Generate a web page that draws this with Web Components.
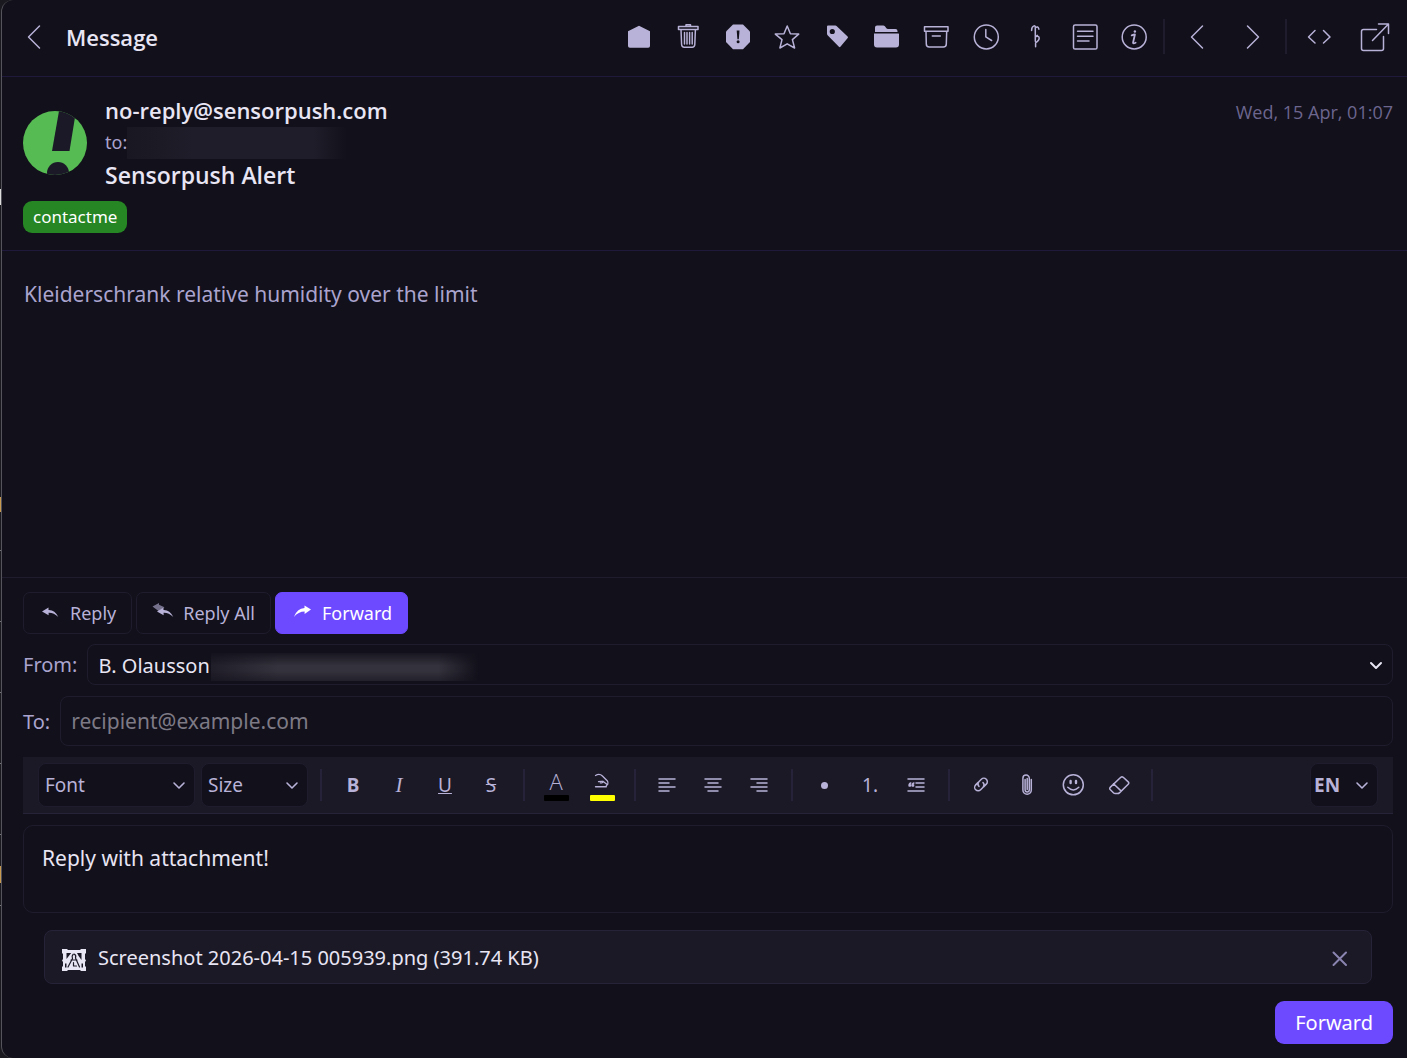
<!DOCTYPE html>
<html lang="en">
<head>
<meta charset="utf-8">
<title>Message</title>
<style>
  html {
    --bg: #12101a;
    --surface: #1b1926;
    --line: #1f1c2e;
    --line-accent: #1f1a3c;
    --text: #e8e5f4;
    --soft: #b8b2d8;
    --muted: #aaa4ce;
    --faint: #6c668f;
    --primary: #6d4aff;
    --heading-font: "Open Sans", "Noto Sans", sans-serif;
    background: #1a191f;
  }
  body {
    margin: 0;
    font-family: "Noto Sans", "Open Sans", sans-serif;
    font-size: 21px;
    color: var(--text);
  }
</style>
</head>
<body>
<mail-window>
  <message-header slot="header">Message</message-header>
  <message-meta slot="meta">
    <span slot="from">no-reply@sensorpush.com</span>
    <span slot="subject">Sensorpush Alert</span>
    <span slot="label">contactme</span>
    <time slot="date">Wed, 15 Apr, 01:07</time>
  </message-meta>
  <message-body slot="body">Kleiderschrank relative humidity over the limit</message-body>
  <reply-composer slot="composer">
    <attachment-item>Screenshot 2026-04-15 005939.png (391.74 KB)</attachment-item>
  </reply-composer>
</mail-window>

<script>
(function() {
  const ICONS = {
    open: '<path fill="currentColor" stroke="none" d="M15 3.8 26 9.2V24q0 1.8-1.8 1.8H5.800Q4 25.800 4 24V9.200Z"/>',
    trash: '<path d="M5.500 4.500h19.500v3h-19.500zM13 4.500v-1.700h4.500v1.700M8 7.500l.6 15q.2 2.800 2.600 2.800h8q2.400 0 2.600-2.800l.6-15M11.500 10.500v11.500M14 10.500v11.500M16.600 10.500v11.500M19.200 10.500v11.500"/>',
    spam: '<path fill="currentColor" stroke="none" d="M10 2.500h10l7 7v10.500l-7 7.200h-10l-7-7.200v-10.500z"/><path fill="#12101a" stroke="none" d="M13.700 8.500h2.800l-.7 8.800h-1.400z"/><circle cx="15.100" cy="19.800" r="1.500" fill="#12101a" stroke="none"/>',
    star: '<path d="m15.200 4 3.200 7.800 8.300.3-6.300 5.500 2.200 8.400-7.400-4.200-7.300 4.200 2.100-8.400-6.700-5.500 8.700-.3z"/>',
    tag: '<path fill="currentColor" stroke="none" fill-rule="evenodd" d="M6 3.600h7.300q.9 0 1.500.6l10.800 10.200q.8.800.1 1.600l-7.300 8.800q-.7.700-1.500 0L5.600 13.300q-.6-.6-.6-1.500V4.600q0-1 1-1zM10.300 6.900a2.600 2.600 0 1 0 0 5.200 2.600 2.600 0 0 0 0-5.200z"/>',
    folder: '<path fill="currentColor" stroke="none" d="M4 10V5.500q0-2 2-2h6.200q1 0 1.700.8l1.500 1.900q.6.700 1.600.7h7.500q2 0 2 2V10zM3 11.500h24.500q.5 0 .5.600V22.500q0 3-3 3H6q-3 0-3-3V12.100q0-.6 0-.6z"/>',
    archive: '<path d="M3.500 4.700h23.500v4.600h-23.500zM5 9.300l.3 12.800q0 3 3 3h14q3 0 3-3l.4-12.800M11.300 14h8"/>',
    clock: '<circle cx="15.300" cy="14.900" r="12"/><path d="M14.800 7.600v7.300l5.800 3.600"/>',
    snooze: '<path d="M11.600 8.500q0-3.800 2.400-4.600 1.200-.3 1.300 1.300V15l2-1.600M15.300 5.600q2.800-2 3.600 1.600M15.300 14.700q4-1.200 3.900 1.500-.2 2.500-3.600 4.600V24.700M15.300 13v6.300"/>',
    note: '<rect x="3.500" y="3" width="23.500" height="24" rx="1.600"/><path d="M7.500 9.300h15.500M7.500 14.200h15.500M7.500 19h11.500"/>',
    info: '<circle cx="15.200" cy="14.900" r="12"/><circle cx="15.900" cy="9.500" r="1.200" fill="currentColor" stroke="none"/><path stroke-width="1.800" d="M12.700 13.300q2-.8 3.200-.8l-1.800 8q-.3 1.600 2.500.2"/>',
    prev: '<path d="M20.500 4 9.500 15 20.500 26"/>',
    next: '<path d="M9.500 4l11 11-11 11"/>',
    code: '<path d="M11 8.500 4.500 15l6.500 6M19.500 8.500l6.500 6.500-6.500 6"/>',
    popout: '<path d="M16.500 7.500H3.500q-2 0-2 2v17q0 2 2 2h18q2 0 2-2V14.500M12.500 18.500 28.500 2M18.500 2h10v9.500"/>',
    reply: '<path fill="currentColor" stroke="none" d="M7 13.500 13.500 9.500v2.400q6.300-.3 9.800 7.100-4.500-4.500-9.700-4.300v2.600z"/>',
    replyall: '<path fill="currentColor" stroke="none" opacity=".6" d="M4.500 8.500 11 5v1.700l5.500 2.500-6 3.800z"/><path fill="currentColor" stroke="none" d="M9 13.500 15.500 9.500v2.400q6.300-.3 9.800 7.100-4.500-4.500-9.700-4.300v2.600z"/>',
    forward: '<path fill="currentColor" stroke="none" d="M24 11.500 17.500 7.500v2.400q-7.500.3-10.600 9.100 4.500-5.500 10.700-5.500v2.600z"/>',
    marker: '<path d="M7.500 7.500q4.500-3 8 .5l5.500 5.500q1.500 2.200.7 4l-2 2.300M7.500 20.500h12.500M11 14.500q5-.7 5 .5t-3 1M16 14l5 4"/>',
    left: '<path d="M7 9h16M7 13h10M7 17h16M7 21h10"/>',
    center: '<path d="M7 9h16M10 13h10M7 17h16M10 21h10"/>',
    right: '<path d="M7 9h16M13 13h10M7 17h16M13 21h10"/>',
    quote: '<path d="M7 9h16M15 13h8M15 17h8M7 21h16"/><path d="M9.800 13q-2 .7-1.700 3h1.300v-1.200H8.200M12.900 13q-2 .7-1.700 3h1.300v-1.200h-1.200"/>',
    link: '<g transform="rotate(-45 15 14.500)"><path d="M14.500 11h-3.500a3.500 3.500 0 0 0 0 7h3.500q3.300-.5 3.300-3.500M15.500 18h3.500a3.500 3.500 0 0 0 0-7h-3.500q-3.300.5-3.300 3.500"/></g>',
    clip: '<path d="M19.300 9.500v10.500a4.200 4.200 0 0 1-8.400 0V8.300a3.200 3.200 0 0 1 6.400 0v11.500a2 2 0 0 1-4.200 0V9.500M15.200 8.500v11"/>',
    smile: '<circle cx="15.300" cy="14.800" r="10"/><path d="M9.800 17.300q5.500 5.300 11 0"/><path stroke-width="2.400" d="M12.600 11v2M18 11v2"/>',
    eraser: '<path d="M16.800 7.300q1.200-1 2.400 0l5 4.600q1.200 1.200 0 2.400l-8.500 8.300q-1 1-2.200 1h-2.300q-1 0-1.800-.8l-3-3q-1.400-1.400 0-2.700zM9.500 13.700l7.500 7.200"/>',
    close: '<path d="M8.500 10.500l12.500 12.500M21 10.500l-12.500 12.500"/>',
    down: '<path d="M10 13l5 5 5-5"/>',
    picture: '<path fill="currentColor" stroke="none" fill-rule="evenodd" d="M3 7h5l1 1h12l1-1h5v4l-1 1v5l1 1.500-1 1.500v4l1 1v4h-5l-1-1H9l-1 1H3v-4l1-1v-4l-1-1.500 1-1.500v-5L3 11zM7.500 11v6l2.700-3.500 2-2.500zM22.500 11h-4.500l1.600 3 2.900 4z"/><path stroke="#1b1926" stroke-width="1.200" d="M15 12q2.500 1 1.500 4l4 9M14 12.500q-1.500 1.500-.5 4l-4.500 8.500M12 18h6M14.500 20.500v3.500h3"/><path fill="#1b1926" stroke="none" d="M6 21.500h1.500v4H6zM22.500 21.500H24v4h-1.500z"/>'
  };

  class MailIcon extends HTMLElement {
    connectedCallback() {
      const root = this.attachShadow({mode: 'open'});
      root.innerHTML = `
<style>
  :host { display: block; width: 30px; height: 30px; flex: none; }
  svg {
    display: block;
    width: 100%;
    height: 100%;
    fill: none;
    stroke: currentColor;
    stroke-width: var(--icon-stroke, 1.5);
    stroke-linejoin: round;
    stroke-linecap: round;
  }
</style>
<svg viewBox="0 0 30 30" aria-hidden="true">${ICONS[this.getAttribute('name')]}</svg>`;
    }
  }

  class MailWindow extends HTMLElement {
    constructor() {
      super();
      this.attachShadow({mode: 'open'}).innerHTML = `
<style>
  :host { display: flex; min-height: 100vh; }
  /* sliver of the message list behind the panel */
  .behind {
    flex: none;
    width: 1px;
    background:
      linear-gradient(#ddd, #ddd) 0 189px / 1px 16px no-repeat,
      linear-gradient(#c89a50, #c89a50) 0 497px / 1px 15px no-repeat,
      linear-gradient(#c89a50, #c89a50) 0 866px / 1px 17px no-repeat,
      repeating-linear-gradient(transparent 0 70px, #77757c 70px 71px) 0 480px / 1px 430px no-repeat,
      #1a191f;
  }
  main {
    flex: 1;
    min-width: 0;
    display: flex;
    flex-direction: column;
    box-sizing: border-box;
    border-left: 1px solid #55535b;
    border-radius: 12px 0 0 12px;
    background: var(--bg);
  }
  slot[name="body"] { display: flex; flex: 1; }
</style>
<div class="behind"></div>
<main>
  <slot name="header"></slot>
  <slot name="meta"></slot>
  <slot name="body"></slot>
  <slot name="composer"></slot>
</main>`;
    }
  }

  class MessageHeader extends HTMLElement {
    constructor() {
      super();
      const actions = [
        ['open', 'Mark as unread'], ['trash', 'Delete'], ['spam', 'Report spam'], ['star', 'Star'],
        ['tag', 'Label'], ['folder', 'Move'], ['archive', 'Archive'], ['clock', 'Remind me'],
        ['snooze', 'Snooze'], ['note', 'Notes'], ['info', 'Details']
      ];
      const button = ([icon, label]) =>
        `<button type="button" aria-label="${label}"><mail-icon name="${icon}"></mail-icon></button>`;
      this.attachShadow({mode: 'open'}).innerHTML = `
<style>
  :host {
    display: flex;
    align-items: center;
    box-sizing: border-box;
    height: 77px;
    padding: 0 4px 3px;
    border-bottom: 1px solid var(--line-accent);
  }
  h1 { flex: 1; margin: 0 0 0 4px; font: 600 22px var(--heading-font); }
  button {
    display: flex;
    align-items: center;
    justify-content: center;
    height: 56px;
    padding: 0;
    border: 0;
    background: none;
    color: var(--soft);
  }
  .wide, .pair button { width: 56px; }
  .actions { display: grid; grid-auto-flow: column; grid-auto-columns: 1fr; width: 545px; }
  .pair { display: flex; }
  hr { width: 2px; height: 35px; margin: 0 4px; border: 0; background: var(--line); }
</style>
<button type="button" class="wide" aria-label="Back"><mail-icon name="prev"></mail-icon></button>
<h1><slot></slot></h1>
<div class="actions">${actions.map(button).join('')}</div>
<hr>
<div class="pair">${[['prev', 'Previous'], ['next', 'Next']].map(button).join('')}</div>
<hr>
<div class="pair">${[['code', 'View source'], ['popout', 'Open in new window']].map(button).join('')}</div>`;
    }
  }

  class MessageMeta extends HTMLElement {
    constructor() {
      super();
      this.attachShadow({mode: 'open'}).innerHTML = `
<style>
  :host {
    display: block;
    padding: 17px 14px 17px 21px;
    border-bottom: 1px solid var(--line-accent);
  }
  .top { display: flex; align-items: center; gap: 18px; }
  .avatar { flex: none; width: 64px; height: 64px; }
  .lines { flex: 1; min-width: 0; }
  .from { font: 600 22px/32px var(--heading-font); }
  .to { display: flex; align-items: center; font-size: 18px; line-height: 33px; color: var(--muted); }
  .hidden {
    width: 220px;
    height: 32px;
    background: linear-gradient(90deg, #191721, #1f1d29 30%, #1f1d29 85%, transparent);
  }
  .subject { margin: 0; font: 600 23px/33px var(--heading-font); }
  .date { align-self: flex-start; font: 18px/36px var(--heading-font); color: var(--faint); }
  .label {
    display: inline-block;
    margin-top: 9px;
    padding: 0 10px;
    border-radius: 9px;
    background: #268624;
    color: #fff;
    font-size: 17px;
    line-height: 32px;
    vertical-align: top;
  }
</style>
<div class="top">
  <svg class="avatar" viewBox="0 0 64 64" role="img" aria-label="Sender logo">
    <clipPath id="round"><circle cx="32" cy="32" r="32"/></clipPath>
    <g clip-path="url(#round)">
      <rect width="64" height="64" fill="#57bb54"/>
      <path fill="#1b1928" d="M36 0 29 40H46.500L53 0z"/>
      <circle cx="35" cy="62" r="11" fill="#1b1928"/>
    </g>
  </svg>
  <div class="lines">
    <div class="from"><slot name="from"></slot></div>
    <div class="to">to:<span class="hidden"></span></div>
    <h2 class="subject"><slot name="subject"></slot></h2>
  </div>
  <div class="date"><slot name="date"></slot></div>
</div>
<div class="label"><slot name="label"></slot></div>`;
    }
  }

  class MessageBody extends HTMLElement {
    constructor() {
      super();
      this.attachShadow({mode: 'open'}).innerHTML = `
<style>
  :host { display: block; flex: 1; padding: 27px 22px; color: var(--muted); line-height: 32px; }
</style>
<slot></slot>`;
    }
  }

  class ReplyComposer extends HTMLElement {
    constructor() {
      super();
      this.attachShadow({mode: 'open'}).innerHTML = `
<style>
  :host {
    display: flex;
    flex-direction: column;
    padding: 14px 14px 14px 21px;
    border-top: 1px solid var(--line);
  }
  button { font: inherit; }
  .modes { display: flex; gap: 4px; margin-bottom: 10px; }
  .modes button {
    display: flex;
    align-items: center;
    gap: 5px;
    box-sizing: border-box;
    height: 42px;
    padding: 0 15px 0 11px;
    border: 1px solid var(--line);
    border-radius: 7px;
    background: none;
    color: var(--soft);
    font-size: 18px;
  }
  .modes .active { border-color: var(--primary); background: var(--primary); color: #fff; }
  .row { display: flex; align-items: center; gap: 10px; margin-bottom: 11px; }
  .row label { font-size: 20px; color: var(--muted); }
  .field { flex: 1; display: grid; align-items: center; position: relative; }
  select, input, textarea {
    box-sizing: border-box;
    width: 100%;
    margin: 0;
    border: 1px solid var(--line);
    border-radius: 8px;
    background: transparent;
    color: var(--text);
    font: inherit;
    outline: 0;
  }
  select { appearance: none; grid-area: 1 / 1; height: 41px; padding: 2px 10px 0; font-size: 20px; }
  option { background: var(--bg); }
  input { height: 50px; padding: 0 10px; }
  input::placeholder { color: #7d7a86; opacity: 1; }
  .field mail-icon {
    grid-area: 1 / 1;
    justify-self: end;
    margin-right: 2px;
    pointer-events: none;
    --icon-stroke: 2;
  }
  /* blurred-out address after the sender name */
  .hidden {
    position: absolute;
    left: 124px;
    top: 9px;
    width: 268px;
    height: 28px;
    background: linear-gradient(90deg, #201e29, #34323c 25%, #34323c 85%, transparent);
    mask-image: linear-gradient(rgba(0,0,0,.2), #000 45%, #000 65%, rgba(0,0,0,.5));
  }
  textarea {
    display: block;
    height: 88px;
    margin: 11px 0 17px;
    padding: 16px 18px;
    border-radius: 10px;
    line-height: 32px;
    resize: none;
  }
  .files { padding: 0 21px; margin-bottom: 17px; }
  .send {
    align-self: flex-end;
    height: 43px;
    padding: 0 20px;
    border: 0;
    border-radius: 9px;
    background: var(--primary);
    color: #fff;
    font-size: 20px;
  }
</style>
<div class="modes">
  <button type="button"><mail-icon name="reply"></mail-icon>Reply</button>
  <button type="button"><mail-icon name="replyall"></mail-icon>Reply All</button>
  <button type="button" class="active"><mail-icon name="forward"></mail-icon>Forward</button>
</div>
<div class="row">
  <label for="from">From:</label>
  <div class="field">
    <select id="from"><option>B. Olausson</option></select>
    <span class="hidden"></span>
    <mail-icon name="down"></mail-icon>
  </div>
</div>
<div class="row">
  <label for="to">To:</label>
  <div class="field"><input id="to" type="email" placeholder="recipient@example.com"></div>
</div>
<format-bar></format-bar>
<textarea aria-label="Message text">Reply with attachment!</textarea>
<div class="files"><slot></slot></div>
<button type="button" class="send">Forward</button>`;
    }
  }

  class FormatBar extends HTMLElement {
    constructor() {
      super();
      const tool = (label, content) => `<button type="button" aria-label="${label}">${content}</button>`;
      const icon = (label, name) => tool(label, `<mail-icon name="${name}"></mail-icon>`);
      const list = (label, cls, value) => `
<span class="list ${cls}">
  <select aria-label="${label}"><option>${value}</option></select>
  <mail-icon name="down"></mail-icon>
</span>`;
      this.attachShadow({mode: 'open'}).innerHTML = `
<style>
  :host {
    display: flex;
    align-items: center;
    box-sizing: border-box;
    height: 57px;
    padding: 0 15px;
    border-bottom: 1px solid #262338;
    background: var(--surface);
    color: var(--soft);
    font-size: 19px;
  }
  .list { display: grid; align-items: center; margin-right: 6px; }
  .font { width: 157px; }
  .size { width: 107px; margin-right: 3px; }
  .lang { width: 68px; margin: 0 0 0 auto; font-weight: 700; }
  select {
    grid-area: 1 / 1;
    appearance: none;
    box-sizing: border-box;
    width: 100%;
    height: 44px;
    padding: 0 6px;
    border: 1px solid var(--line);
    border-radius: 8px;
    background: var(--bg);
    color: inherit;
    font: inherit;
  }
  .lang select { padding: 0 3px; }
  .list mail-icon { grid-area: 1 / 1; justify-self: end; margin-right: 1px; pointer-events: none; --icon-stroke: 1.6; }
  button {
    display: flex;
    flex-direction: column;
    align-items: center;
    justify-content: center;
    width: 46px;
    height: 46px;
    padding: 0;
    border: 0;
    background: none;
    color: inherit;
    font: inherit;
  }
  hr { width: 2px; height: 32px; margin: 0 8px 0 9px; border: 0; background: #25223a; }
  i { font-family: "Liberation Serif", serif; font-size: 21px; }
  .letter { height: 26px; font: 300 22px/24px var(--heading-font); }
  .marker { height: 26px; }
  .swatch { width: 25px; height: 6px; border-radius: 1px; background: #000; }
  .yellow { background: #ff0; }
  .dot { width: 7px; height: 7px; border-radius: 50%; background: currentColor; }
</style>
${list('Font', 'font', 'Font')}
${list('Size', 'size', 'Size')}
<hr>
${tool('Bold', '<b>B</b>')}
${tool('Italic', '<i>I</i>')}
${tool('Underline', '<u>U</u>')}
${tool('Strikethrough', '<s>S</s>')}
<hr>
${tool('Text colour', '<span class="letter">A</span><span class="swatch"></span>')}
${tool('Highlight colour', '<mail-icon name="marker" class="marker"></mail-icon><span class="swatch yellow"></span>')}
<hr>
${icon('Align left', 'left')}
${icon('Align center', 'center')}
${icon('Align right', 'right')}
<hr>
${tool('Bulleted list', '<span class="dot"></span>')}
${tool('Numbered list', '1.')}
${icon('Quote', 'quote')}
<hr>
${icon('Insert link', 'link')}
${icon('Attach file', 'clip')}
${icon('Emoji', 'smile')}
${icon('Clear formatting', 'eraser')}
<hr>
${list('Language', 'lang', 'EN')}`;
    }
  }

  class AttachmentItem extends HTMLElement {
    constructor() {
      super();
      this.attachShadow({mode: 'open'}).innerHTML = `
<style>
  :host {
    display: flex;
    align-items: center;
    gap: 9px;
    box-sizing: border-box;
    height: 54px;
    padding: 0 16px 0 14px;
    border: 1px solid #262338;
    border-radius: 8px;
    background: var(--surface);
    font-size: 20px;
  }
  .name { flex: 1; }
  button { padding: 0; border: 0; background: none; color: #8a84b0; --icon-stroke: 2; }
</style>
<mail-icon name="picture"></mail-icon>
<span class="name"><slot></slot></span>
<button type="button" aria-label="Remove attachment"><mail-icon name="close"></mail-icon></button>`;
    }
  }

  customElements.define('mail-icon', MailIcon);
  customElements.define('mail-window', MailWindow);
  customElements.define('message-header', MessageHeader);
  customElements.define('message-meta', MessageMeta);
  customElements.define('message-body', MessageBody);
  customElements.define('format-bar', FormatBar);
  customElements.define('attachment-item', AttachmentItem);
  customElements.define('reply-composer', ReplyComposer);
})();
</script>
</body>
</html>
